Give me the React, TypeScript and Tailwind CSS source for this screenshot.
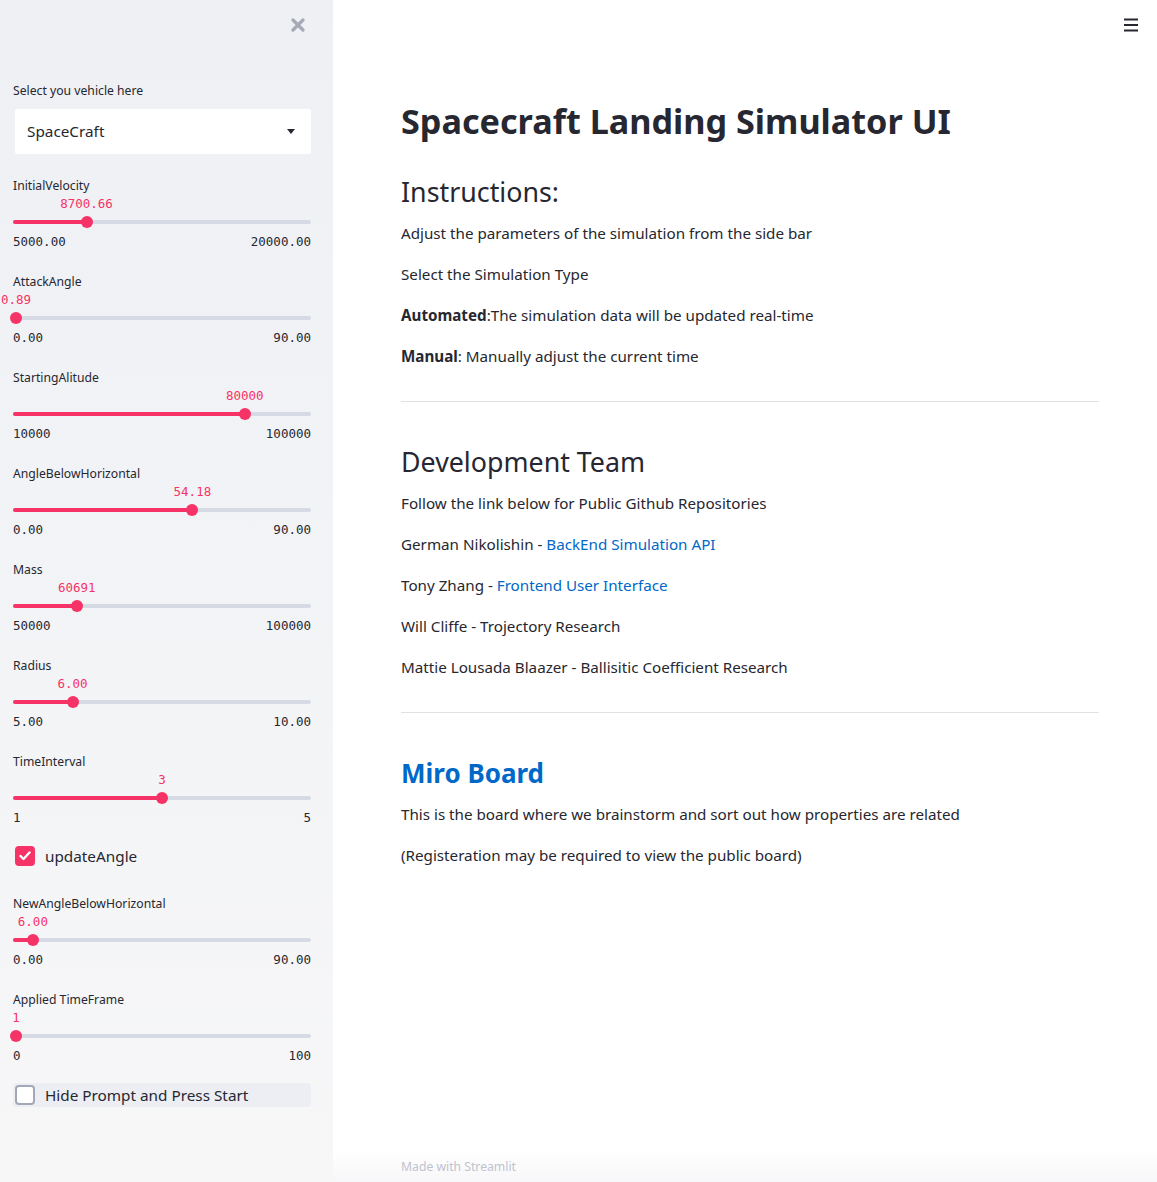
import React from "react";

const sans = "font-['Noto_Sans',_'Open_Sans',_sans-serif]";
const mono = "font-['DejaVu_Sans_Mono',_'Liberation_Mono',_monospace]";

interface SliderData {
  label: string;
  value: string;
  min: string;
  max: string;
  pct: number;
}

const sliders: SliderData[] = [
  { label: "InitialVelocity", value: "8700.66", min: "5000.00", max: "20000.00", pct: (8700.66 - 5000) / 15000 },
  { label: "AttackAngle", value: "0.89", min: "0.00", max: "90.00", pct: 0.89 / 90 },
  { label: "StartingAlitude", value: "80000", min: "10000", max: "100000", pct: 70000 / 90000 },
  { label: "AngleBelowHorizontal", value: "54.18", min: "0.00", max: "90.00", pct: 54.18 / 90 },
  { label: "Mass", value: "60691", min: "50000", max: "100000", pct: 10691 / 50000 },
  { label: "Radius", value: "6.00", min: "5.00", max: "10.00", pct: 1 / 5 },
  { label: "TimeInterval", value: "3", min: "1", max: "5", pct: 0.5 },
];

function Slider({ item }: { item: SliderData }) {
  const left = `${item.pct * 100}%`;
  return (
    <div className="h-[74px] mb-[22px]">
      <div className="h-4 text-[12.2px] leading-4 text-[#262730]">{item.label}</div>
      <div className="relative h-5">
        <span
          className={`absolute top-0 -translate-x-1/2 text-[12.5px] leading-5 text-[#f63366] whitespace-nowrap ${mono}`}
          style={{ left }}
        >
          {item.value}
        </span>
      </div>
      <div className="relative h-4 flex items-center">
        <div className="w-full h-1 rounded-full bg-[#d5dae5]" />
        <div className="absolute left-0 h-1 rounded-full bg-[#f63366]" style={{ width: left }} />
        <div
          className="absolute w-3 h-3 rounded-full bg-[#f63366] -translate-x-1/2"
          style={{ left }}
        />
      </div>
      <div className={`flex justify-between h-5 mt-[2px] text-[12.5px] leading-5 text-[#262730] ${mono}`}>
        <span>{item.min}</span>
        <span>{item.max}</span>
      </div>
    </div>
  );
}

function Checkbox({ checked, label }: { checked: boolean; label: string }) {
  return (
    <div className="flex items-center gap-[10px] h-5 pl-[2px]">
      {checked ? (
        <div className="w-5 h-5 rounded-[4px] bg-[#f63366] flex items-center justify-center">
          <svg width="12" height="10" viewBox="0 0 12 10">
            <polyline points="1.5,5 4.5,8 10.5,1.5" fill="none" stroke="white" strokeWidth="2.4" strokeLinecap="round" strokeLinejoin="round" />
          </svg>
        </div>
      ) : (
        <div className="w-5 h-5 rounded-[4px] border-2 border-[#a3a8b8] bg-white" />
      )}
      <span className="text-[15.3px] text-[#262730]">{label}</span>
    </div>
  );
}

export default function App() {
  return (
    <div className={`flex min-h-[1182px] w-full ${sans} text-[#262730]`}>
      {/* sidebar */}
      <aside className="w-[333px] shrink-0 bg-gradient-to-b from-[#eef0f4] to-[#f7f7f8] pl-[13px] pr-[22px]">
        <div className="flex justify-end h-[50px] pt-[18px] pr-[6px]">
          <svg width="14" height="14" viewBox="0 0 14 14">
            <path d="M2 2 L12 12 M12 2 L2 12" stroke="#a6aab6" strokeWidth="3.2" strokeLinecap="round" />
          </svg>
        </div>
        <div className="mt-[33px] h-4 text-[12.2px] leading-4">Select you vehicle here</div>
        <div className="mt-[10px] ml-[2px] h-[45px] bg-white rounded-[2px] flex items-center justify-between pl-3 pr-4">
          <span className="text-[15.3px]">SpaceCraft</span>
          <svg width="8" height="5" viewBox="0 0 8 5">
            <path d="M0 0 L8 0 L4 5 Z" fill="#262730" />
          </svg>
        </div>
        <div className="mt-[24px]">
          {sliders.map((s, i) => (
            <Slider key={i} item={s} />
          ))}
        </div>
        <div className="-mt-[4px]">
          <Checkbox checked label="updateAngle" />
        </div>
        <div className="mt-[30px]">
          <Slider item={{ label: "NewAngleBelowHorizontal", value: "6.00", min: "0.00", max: "90.00", pct: 6 / 90 }} />
          <Slider item={{ label: "Applied TimeFrame", value: "1", min: "0", max: "100", pct: 0.01 }} />
        </div>
        <div className="-mt-[5px] h-6 rounded-[4px] bg-[#eceef3] flex items-center">
          <Checkbox checked={false} label="Hide Prompt and Press Start" />
        </div>
      </aside>

      {/* main */}
      <main className="relative flex-1 flex flex-col bg-white">
        <div className="absolute top-[18px] right-[19px]">
          <svg width="14" height="14" viewBox="0 0 14 14">
            <path d="M0 1.5 H14 M0 7 H14 M0 12.5 H14" stroke="#262730" strokeWidth="2" />
          </svg>
        </div>
        <div className="w-[698px] ml-[68px] pt-[99px]">
          <h1 className="text-[34.2px] leading-[44px] font-bold">Spacecraft Landing Simulator UI</h1>
          <h2 className="mt-[31px] text-[26.8px] leading-9">Instructions:</h2>
          <div className="mt-[11px] flex flex-col gap-[17px] text-[15.2px] leading-6">
            <p>Adjust the parameters of the simulation from the side bar</p>
            <p>Select the Simulation Type</p>
            <p>
              <b>Automated</b>:The simulation data will be updated real-time
            </p>
            <p>
              <b>Manual</b>: Manually adjust the current time
            </p>
          </div>
          <hr className="mt-[33px] border-0 border-t border-[#e0e0e5]" />
          <h2 className="mt-[42px] text-[26.8px] leading-9">Development Team</h2>
          <div className="mt-[11px] flex flex-col gap-[17px] text-[15.2px] leading-6">
            <p>Follow the link below for Public Github Repositories</p>
            <p>
              German Nikolishin - <a className="text-[#0068c9]">BackEnd Simulation API</a>
            </p>
            <p>
              Tony Zhang - <a className="text-[#0068c9]">Frontend User Interface</a>
            </p>
            <p>Will Cliffe - Trojectory Research</p>
            <p>Mattie Lousada Blaazer - Ballisitic Coefficient Research</p>
          </div>
          <hr className="mt-[33px] border-0 border-t border-[#e0e0e5]" />
          <h2 className="mt-[42px] text-[26px] leading-9 font-bold text-[#0068c9]">Miro Board</h2>
          <div className="mt-[11px] flex flex-col gap-[17px] text-[15.2px] leading-6">
            <p>This is the board where we brainstorm and sort out how properties are related</p>
            <p>(Registeration may be required to view the public board)</p>
          </div>
        </div>
        <div className="mt-auto h-[32px] pt-[9px] pl-[68px] bg-gradient-to-b from-white to-[#f7f7f9] text-[12.2px] leading-4 text-[#bfc3cf]">
          Made with Streamlit
        </div>
      </main>
    </div>
  );
}
